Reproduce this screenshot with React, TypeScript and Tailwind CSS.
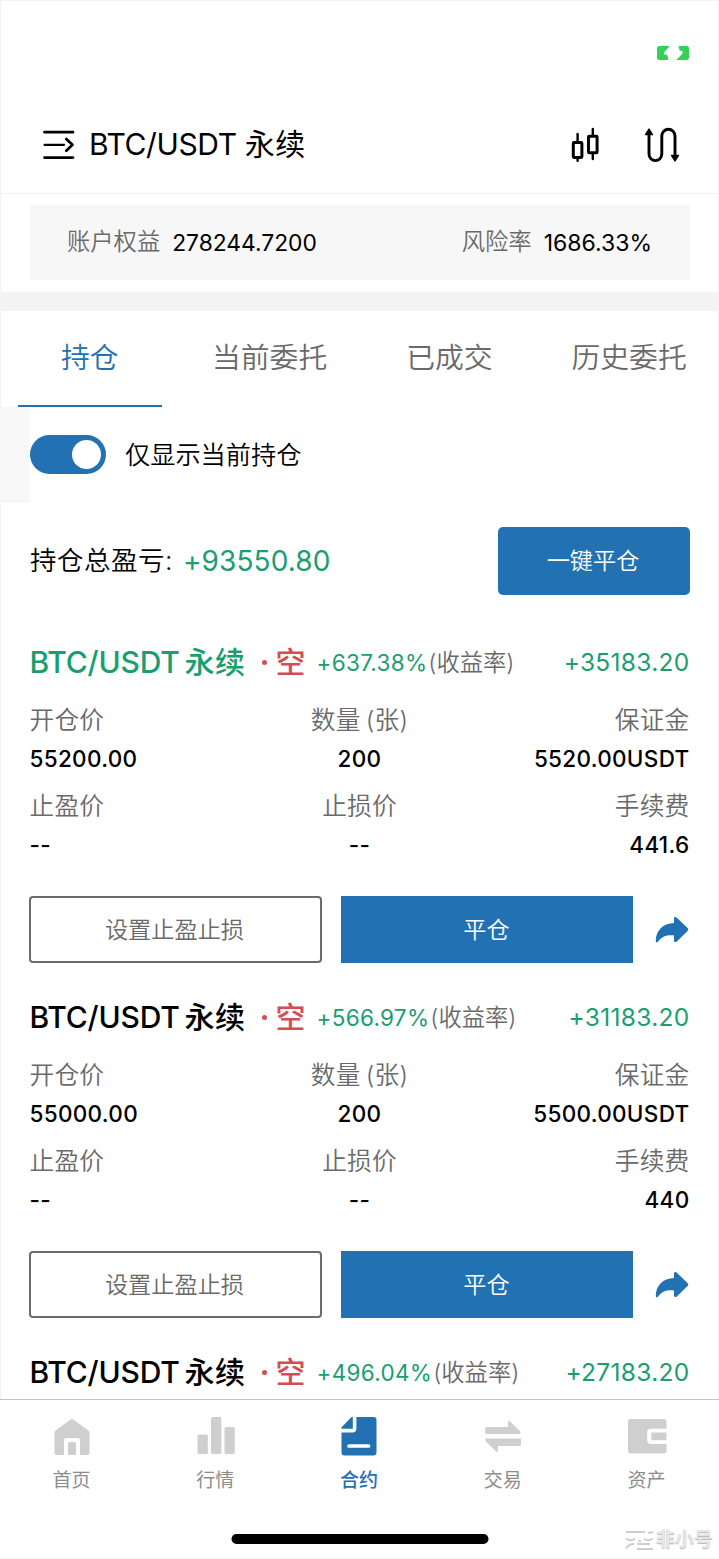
import React from "react";

type Position = {
	rate: string;
	pnl: string;
	price?: string;
	amount?: string;
	margin?: string;
	fee?: string;
	highlighted?: boolean;
};

const POSITIONS: Position[] = [
	{ rate: "+637.38%", pnl: "+35183.20", price: "55200.00", amount: "200", margin: "5520.00USDT", fee: "441.6", highlighted: true },
	{ rate: "+566.97%", pnl: "+31183.20", price: "55000.00", amount: "200", margin: "5500.00USDT", fee: "440" },
	{ rate: "+496.04%", pnl: "+27183.20" },
];

const TABS = ["持仓", "当前委托", "已成交", "历史委托"];

function BatteryIcon() {
	return (
		<svg width="34" height="16" viewBox="0 0 34 16" fill="#32d158">
			<path d="M3.5 1H13.8L8 7.4Q7.2 9.3 9 9.8H11.2L12.5 15H3.5Q1 15 1 12.5V3.5Q1 1 3.5 1Z" />
			<path d="M22.5 1H30.5Q33 1 33 3.5V12.5Q33 15 30.5 15H20.3L26.6 8.4Q27.4 6.4 25.4 5.8H23.6Z" />
		</svg>
	);
}

function MenuIcon() {
	return (
		<svg width="32" height="30" viewBox="0 0 32 30" fill="none" stroke="#000" strokeLinecap="round" strokeLinejoin="round">
			<path d="M1.5 2.2H30M1.5 27.6H30" strokeWidth="2.7" />
			<path d="M1.5 14.8H21" strokeWidth="2.2" />
			<path d="M23.3 9L29.4 14.8L23.3 20.8" strokeWidth="2.7" />
		</svg>
	);
}

function CandlesIcon() {
	return (
		<svg width="28" height="36" viewBox="0 0 28 36" fill="none" stroke="#000" strokeWidth="3" strokeLinecap="round">
			<rect x="2.3" y="15.4" width="8.6" height="15" rx="0.8" />
			<rect x="17.5" y="9.2" width="8.6" height="16.6" rx="0.8" />
			<path d="M6.6 7V14M6.6 31V33.8M21.8 2V8M21.8 27V32" strokeWidth="2.4" />
		</svg>
	);
}

function RouteIcon() {
	return (
		<svg width="36" height="36" viewBox="0 0 36 36" fill="none" stroke="#000" strokeWidth="2.9">
			<path d="M5 6V27A6.4 6.6 0 0 0 17.8 27V9A6.6 6.8 0 0 1 31 9V29" />
			<path d="M5 2L8.5 7.6H1.5ZM31 34L34.5 28.4H27.5Z" fill="#000" strokeWidth="1.4" strokeLinejoin="round" />
		</svg>
	);
}

function ShareIcon() {
	return (
		<svg width="34" height="28" viewBox="0 0 34 28">
			<path d="M19 1.6Q20.3 0.3 21.8 1.7L32.8 12.2Q34 13.6 32.8 14.8L21.8 25.4Q20.3 26.6 19 25.2V19.4C11.5 18.8 6.5 20.6 3.2 25.6Q1.8 27 0.8 25.4C0.6 14.5 8 7.4 19 7Z" fill="#2271b3" />
		</svg>
	);
}

function HomeIcon() {
	return (
		<svg width="40" height="40" viewBox="0 0 40 40" fill="#cfcfcf">
			<path d="M18.8 3.6Q20 2.6 21.2 3.6L36.4 14.6Q37.5 15.5 37.5 17V37Q37.5 39 35.5 39H28V24.5Q28 22 25.5 22H14.5Q12 22 12 24.5V39H4.5Q2.5 39 2.5 37V17Q2.5 15.5 3.6 14.6Z" />
			<rect x="16" y="26" width="8" height="13" rx="1.5" />
		</svg>
	);
}

function MarketIcon() {
	return (
		<svg width="40" height="40" viewBox="0 0 40 40" fill="#cfcfcf">
			<rect x="1.5" y="18.5" width="10.3" height="19.5" rx="1.5" />
			<rect x="15" y="1" width="10.3" height="37" rx="1.5" />
			<rect x="28.5" y="11" width="10.3" height="27" rx="1.5" />
		</svg>
	);
}

function ContractIcon() {
	return (
		<svg width="40" height="40" viewBox="0 0 40 40" fill="#2271b3">
			<path d="M13.8 1V12.7H2.4V11.5L12.5 1Z" />
			<path d="M17.4 1H34.5Q37.5 1 37.5 4V36.500Q37.500 39.500 34.500 39.500H5.500Q2.500 39.500 2.500 36.500V16.500H13.400Q17.400 16.500 17.400 12.500Z" />
			<rect x="8.3" y="28.2" width="23" height="3.6" rx="1.6" fill="#fff" />
		</svg>
	);
}

function TradeIcon() {
	return (
		<svg width="40" height="40" viewBox="0 0 40 40" fill="#cfcfcf">
			<path d="M3.5 11H25V5.6Q25.3 4.2 26.8 5.2L37.3 15.5V18H3.5Q2.2 18 2.2 16.7V12.3Q2.2 11 3.5 11Z" />
			<path d="M2.5 22.5H36.7Q38 22.5 38 23.8V28.7Q38 30 36.7 30H15V35Q14.5 36.8 13 35.6L2.5 25Z" />
		</svg>
	);
}

function WalletIcon() {
	return (
		<svg width="40" height="40" viewBox="0 0 40 40" fill="#cfcfcf">
			<path d="M4 3H36.5Q39.500 3 39.500 6V12.800H24Q20.200 12.800 20.200 16.500V24.300Q20.200 28 24 28H39.500V34.500Q39.500 37.500 36.500 37.500H4Q1 37.500 1 34.500V6Q1 3 4 3Z" />
			<path d="M24.3 16.5H39.5V24.2H24.3Z" />
		</svg>
	);
}

function WatermarkIcon() {
	return (
		<svg width="29" height="22" viewBox="0 0 29 22" fill="none" stroke="#cdcdcd" strokeWidth="1.8">
			<path d="M1 3H20M23 4L28 3M1 9.5Q6 13 10 9.500M19 9.500Q23 13 28 9.500M13 12H16M1 19.500Q4 15 9 15M12 15H25M12 20H28" />
		</svg>
	);
}

const NAV = [
	{ name: "首页", icon: <HomeIcon /> },
	{ name: "行情", icon: <MarketIcon /> },
	{ name: "合约", icon: <ContractIcon />, active: true },
	{ name: "交易", icon: <TradeIcon /> },
	{ name: "资产", icon: <WalletIcon /> },
];

function Cell({ label, value, align }: { label: string; value?: string; align: string }) {
	return (
		<div className={`flex flex-col ${align}`}>
			<p className="h-[38px] leading-[38px] text-[24.7px] font-[350] text-[#6a6a6a] tracking-[0.2px] [word-spacing:-2px]">{label}</p>
			<p className="h-[39px] leading-[39px] text-[22.5px] font-medium text-black tracking-[0.3px]">{value}</p>
		</div>
	);
}

function PositionCard({ position }: { position: Position }) {
	return (
		<div className="flex-none px-[29.5px]">
			<div className="flex h-[45px] items-center whitespace-nowrap">
				<p className={`w-[232px] pb-px text-[30px] leading-[44px] font-medium ${position.highlighted ? "text-[#1a9e6f]" : "text-black"}`}>
					<span className="tracking-[-0.2px]">BTC/USDT</span>
					<span className="ml-[5px] tracking-[0.3px]">永续</span>
				</p>
				<span className="size-[5px] rounded-full bg-[#d64c52] mr-[9px]" />
				<p className="w-[41px] pb-px text-[30px] leading-[44px] font-medium text-[#d64c52]">空</p>
				<p className="text-[22.5px] text-[#1a9e6f] tracking-[0.3px]">{position.rate}</p>
				<p className="ml-px pt-px text-[23.3px] font-[350] text-[#6a6a6a]">(收益率)</p>
				<div className="grow" />
				<p className="text-[24.5px] text-[#1a9e6f] tracking-[0.3px]">{position.pnl}</p>
			</div>
			{position.price ? (
				<>
					<div className="grid grid-cols-3 gap-y-[9px] pt-4">
						<Cell label="开仓价" value={position.price} align="items-start" />
						<Cell label="数量 (张)" value={position.amount} align="items-center" />
						<Cell label="保证金" value={position.margin} align="items-end" />
						<Cell label="止盈价" value="--" align="items-start" />
						<Cell label="止损价" value="--" align="items-center" />
						<Cell label="手续费" value={position.fee} align="items-end" />
					</div>
					<div className="my-8 flex h-[67px] items-center">
						<button type="button" className="-ml-[0.5px] h-full w-[293px] rounded-[4px] border-2 border-[#6b6b6b] pr-[2px] text-[23.2px] font-[350] leading-[34px] text-[#6a6a6a]">设置止盈止损</button>
						<button type="button" className="ml-[19px] h-full w-[292px] bg-[#2271b3] pr-px text-[23.2px] font-[350] leading-[34px] text-white">平仓</button>
						<button type="button" className="ml-[22px]"><ShareIcon /></button>
					</div>
				</>
			) : undefined}
		</div>
	);
}

export function App() {
	return (
		<div className="flex h-[1559px] w-[719px] flex-col border border-[#f3f3f3] bg-white font-['Inter','Noto_Sans_CJK_SC',sans-serif]">
			<div className="-mx-px -mt-px flex h-[194px] flex-none flex-col border-b border-[#f0f0f0]">
				<div className="flex h-[97px] flex-none items-end justify-end pr-[29px] pb-9">
					<BatteryIcon />
				</div>
				<div className="flex h-[96px] flex-none items-center pl-[43px] pr-[39px]">
					<MenuIcon />
					<p className="ml-[14px] pb-[2px] text-[30px] leading-[44px]"><span className="tracking-[-0.4px]">BTC/USDT</span><span className="ml-[8px] tracking-[0.6px]">永续</span></p>
					<div className="grow" />
					<CandlesIcon />
					<div className="ml-[45px]"><RouteIcon /></div>
				</div>
			</div>

			<div className="-mx-px flex h-[116.5px] flex-none flex-col border-b-[19px] border-[#f4f4f4] px-[29.5px] pt-[10.5px]">
				<div className="flex h-[75.5px] items-center justify-between bg-[#f7f7f7] px-[37.5px] pt-px">
					<p className="flex items-center text-[23.3px] font-[350] text-[#6a6a6a]">账户权益<span className="ml-3 text-[22.8px] font-normal text-black">278244.7200</span></p>
					<p className="flex items-center text-[23.3px] font-[350] text-[#6a6a6a]">风险率<span className="ml-3 text-[23px] font-normal text-black">1686.33%</span></p>
				</div>
			</div>

			<div className="-mx-px grid h-[96px] flex-none grid-cols-4">
				{TABS.map((tab, i) => (
					<div key={tab} className={`mx-[18px] flex justify-center whitespace-nowrap pt-[26px] text-[28.8px] font-[350] leading-[42px] ${i === 0 ? "border-b-2 border-[#2271b3] text-[#2271b3]" : "text-[#6a6a6a]"}`}>
						<span>{tab}</span>
					</div>
				))}
			</div>

			<div className="-mx-px flex h-[96px] flex-none items-center">
				<div className="h-full w-[29.5px] bg-[#f8f8f8]" />
				<div className="mb-px flex h-[39px] w-[76.5px] items-center justify-end rounded-full bg-[#2271b3] pr-[5px]">
					<div className="size-[29px] rounded-full bg-white" />
				</div>
				<p className="ml-[19px] pt-px text-[25.2px] font-[350] leading-[38px]">仅显示当前持仓</p>
			</div>

			<div className="-mx-px mt-[24.5px] flex h-[68px] flex-none items-center px-[29px]">
				<p className="pl-px text-[26.5px] font-[350] tracking-[0.5px]">持仓总盈亏:</p>
				<p className="ml-[10px] text-[28px] text-[#1a9e6f] tracking-[0.1px]">+93550.80</p>
				<div className="grow" />
				<button type="button" className="h-[68px] w-[192px] rounded-[5px] bg-[#2271b3] pr-[2px] text-[23.2px] font-[350] text-white">一键平仓</button>
			</div>

			<div className="-mx-px flex h-[804px] flex-none flex-col pt-[45px]">
				{POSITIONS.map((position) => <PositionCard key={position.pnl} position={position} />)}
			</div>

			<div className="relative -mx-px flex grow flex-col border-t border-[#c4c4c4] bg-white">
				<div className="grid grid-cols-5 pt-4">
					{NAV.map((item) => (
						<div key={item.name} className={`flex flex-col items-center text-[19px] ${item.active ? "text-[#2271b3] font-medium" : "text-[#8c8c8c]"}`}>
							{item.icon}
							<p className="mt-[11px] pr-px leading-[28px]">{item.name}</p>
						</div>
					))}
				</div>
				<div className="mx-auto mt-[39px] h-[10px] w-[257px] translate-x-[0.5px] rounded-full bg-black" />
				<div className="absolute bottom-[6px] right-[6px] flex items-center gap-[2px]">
					<WatermarkIcon />
					<span className="text-[19px] font-bold leading-[24px] text-[#e6e6e6] [text-shadow:0_1px_1px_#b5b5b5]">非小号</span>
				</div>
			</div>
		</div>
	);
}

export default App;
